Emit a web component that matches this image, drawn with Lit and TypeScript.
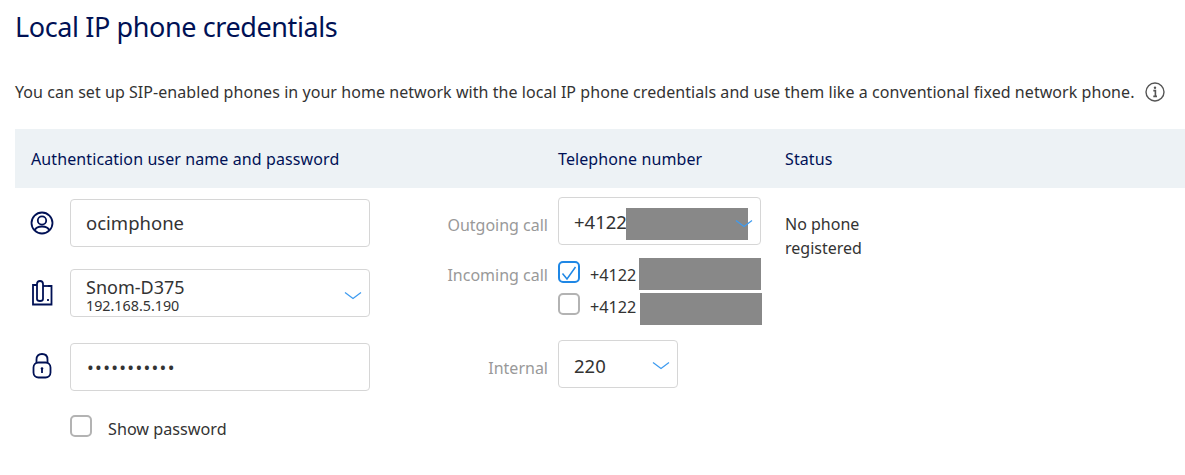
import { LitElement, html, css } from "lit";
import { customElement } from "lit/decorators.js";

const chevron = html`<svg class="chev" width="18" height="9" viewBox="0 0 18 9" fill="none"><path d="M1 1.5 L9 7.5 L17 1.5" stroke="#3d9bf0" stroke-width="1.2"/></svg>`;

@customElement("app-root")
export class AppRoot extends LitElement {
  static styles = css`
    :host { display: block; width: 1185px; height: 475px; overflow: hidden; background: #fff; color: #333; font-family: "Noto Sans", sans-serif; font-size: 16px; }
    * { box-sizing: border-box; }
    .page { padding: 8px 0 0 15px; }
    h1 { margin: 0; font-size: 27px; line-height: 38px; font-weight: 400; color: #001155; letter-spacing: -0.4px; }
    .intro { display: flex; align-items: center; gap: 10px; margin-top: 33px; height: 26px; font-size: 16px; letter-spacing: 0.055px; white-space: nowrap; }
    .info { flex: none; }
    .band { display: flex; align-items: center; height: 59px; margin-top: 24px; background: #edf2f5; color: #001155; font-size: 16px; letter-spacing: 0.1px; }
    .band span:nth-child(1) { width: 543px; padding-left: 16px; }
    .band span:nth-child(2) { width: 227px; }
    .body { display: flex; }
    .creds { width: 355px; padding-top: 11px; }
    .row { display: flex; align-items: center; gap: 12px; }
    .row + .row { margin-top: 22px; }
    .row.pw { margin-top: 26px; }
    .row svg.ic { flex: none; width: 43px; }
    .row.pw svg.ic { margin-top: -2px; }
    .field { display: flex; align-items: center; position: relative; height: 48px; border: 1px solid #d6d6d6; border-radius: 4px; background: #fff; padding-left: 15px; font-size: 18.5px; }
    .wide { width: 300px; }
    .user { padding-bottom: 2px; }
    .chev { position: absolute; right: 7px; top: 21px; }
    .two { display: block; padding: 5px 0 0 15px; font-size: 18px; line-height: 24px; }
    .two small { display: block; font-size: 14.3px; line-height: 14px; }
    .dots { letter-spacing: 1.3px; font-size: 18px; padding-left: 16px; }
    .show { display: flex; align-items: flex-start; gap: 16px; margin: 24px 0 0 55px; font-size: 16.2px; }
    .show span.txt { margin-top: 3px; line-height: 22px; }
    .box { flex: none; width: 22px; height: 22px; border: 2px solid #b3b3b3; border-radius: 5px; background: #fff; position: relative; display: block; }
    .box.on { border-color: #1f87e5; }
    .box svg { position: absolute; left: 1px; top: 0; overflow: visible; }
    .phones { width: 415px; padding: 9px 0 0 0; display: grid; grid-template-columns: 178px 1fr; column-gap: 10px; align-content: start; }
    .lab { color: #999; font-size: 16px; text-align: right; white-space: nowrap; }
    .mid { align-self: center; margin-top: 8px; }
    .out { width: 203px; }
    .int { width: 120px; margin-top: 10px; padding-top: 3px; }
    .int .chev { top: 20px; }
    .lab.in { margin-top: 19px; }
    .lab.intl { align-self: center; margin-top: 18px; }
    .checks { margin-top: 16px; margin-bottom: 15px; display: flex; flex-direction: column; gap: 10px; }
    .chk { display: flex; align-items: center; gap: 10px; position: relative; height: 22px; font-size: 16.2px; }
    .num { padding-top: 5px; }
    .mask { position: absolute; width: 122px; height: 32px; background: #888; }
    .m1 { left: 67px; top: 10px; }
    .m2 { left: 81px; top: -3px; }
    .m3 { left: 82px; top: 0; }
    .status { padding-top: 24px; font-size: 16px; line-height: 24px; width: 90px; }
  `;

  render() {
    return html`<div class="page">
      <h1>Local IP phone credentials</h1>
      <div class="intro">
        <span>You can set up SIP-enabled phones in your home network with the local IP phone credentials and use them like a conventional fixed network phone.</span>
        <svg class="info" width="20" height="20" viewBox="0 0 20 20" fill="none"><circle cx="10" cy="10" r="9" stroke="#555" stroke-width="1.4"/><circle cx="10" cy="5.8" r="1.2" fill="#555"/><path d="M8.3 8.6H10.4V14M8.3 14.4H12" stroke="#555" stroke-width="1.6"/></svg>
      </div>
      <div class="band"><span>Authentication user name and password</span><span>Telephone number</span><span>Status</span></div>
      <div class="body">
        <div class="creds">
          <div class="row">
            <svg class="ic" width="43" height="24" viewBox="0 0 43 24" fill="none" stroke="#001155" stroke-width="1.8"><circle cx="27" cy="12" r="10.5"/><circle cx="27" cy="9.5" r="4.2"/><path d="M19.5 19.5C21 16 24 15.5 27 15.5S33 16 34.5 19.5"/></svg>
            <div class="field wide user">ocimphone</div>
          </div>
          <div class="row">
            <svg class="ic" width="43" height="26" viewBox="0 0 43 26" fill="none" stroke="#001155" stroke-width="1.8"><path d="M22 5H18V24.5H36.5V6H33"/><path d="M22 19V4Q22 1 25 1T28 4V19Q28 21 25 21T22 19Z"/><path d="M28 6H33"/><path d="M33 19V21"/></svg>
            <div class="field wide two">Snom-D375<small>192.168.5.190</small>${chevron}</div>
          </div>
          <div class="row pw">
            <svg class="ic" width="43" height="26" viewBox="0 0 43 26" fill="none" stroke="#001155" stroke-width="1.8"><path d="M21.5 10V6.500Q21.500 1 27 1T32.500 6.500V10"/><rect x="18.500" y="9.500" width="17" height="15" rx="5"/><circle cx="27" cy="15.500" r="1.300" fill="#001155" stroke="none"/><path d="M27 16V20"/></svg>
            <div class="field wide dots">•••••••••••</div>
          </div>
          <label class="show"><span class="box"></span><span class="txt">Show password</span></label>
        </div>
        <div class="phones">
          <div class="lab mid">Outgoing call</div>
          <div class="field out">+4122<span class="mask m1"></span>${chevron}</div>
          <div class="lab in">Incoming call</div>
          <div class="checks">
            <div class="chk"><span class="box on"><svg width="16" height="18" viewBox="0 0 16 18" fill="none"><path d="M1.500 10.500L6 16L14.500 4" stroke="#1f87e5" stroke-width="1.500"/></svg></span><span class="num">+4122</span><span class="mask m2"></span></div>
            <div class="chk"><span class="box"></span><span class="num">+4122</span><span class="mask m3"></span></div>
          </div>
          <div class="lab intl">Internal</div>
          <div class="field int">220${chevron}</div>
        </div>
        <div class="status">No phone registered</div>
      </div>
    </div>`;
  }
}
